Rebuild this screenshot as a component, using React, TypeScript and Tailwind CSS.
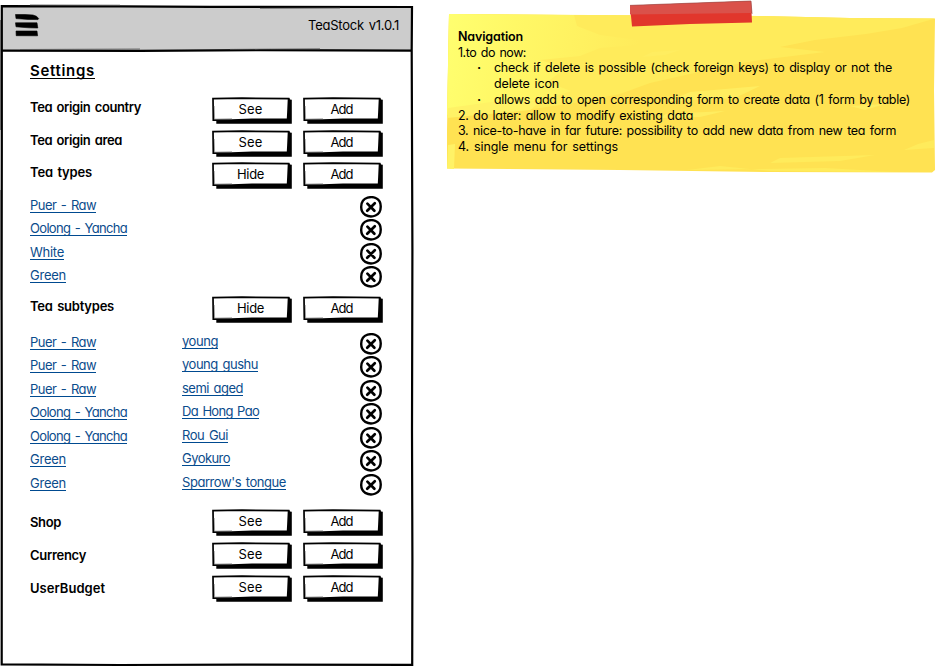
import { useLayoutEffect, useRef, useState } from "react";
import type { ReactNode } from "react";

type FitProps = { text: string; width: number; className?: string };

// Tracks a single line of text so that it spans the given width.
function Fit({ text, width, className = "" }: FitProps) {
  const ref = useRef<HTMLSpanElement>(null);
  const [spacing, setSpacing] = useState(0);
  useLayoutEffect(() => {
    const el = ref.current;
    if (!el) return;
    const old = el.style.letterSpacing;
    el.style.letterSpacing = "0px";
    const natural = el.getBoundingClientRect().width;
    el.style.letterSpacing = old;
    setSpacing((width - natural) / text.length);
  }, [text, width]);
  return (
    <span
      ref={ref}
      className={`inline-block whitespace-pre ${className}`}
      style={{ letterSpacing: `${spacing}px` }}
    >
      {text}
    </span>
  );
}

function SketchButton({ text, width }: { text: string; width: number }) {
  return (
    <button className="relative flex h-[27px] w-[81px] items-start justify-center pt-[4px] pr-[4px] leading-[16px]">
      <svg className="absolute inset-0" width="81" height="27" viewBox="0 0 81 27">
        <path d="M4.3 4H76V1.4L77.5 1.2L78 2.6L79.8 2.8V26.7H4.3V24L3 23.5Z" fill="#000" />
        <path d="M1 1.6L30 1.2L76.6 1.7L76 15L75.6 22.2L40 22.4L20 23L1.3 23.2Z" fill="#fff" stroke="#000" strokeWidth="1.7" />
        <path d="M2.2 9L2.6 22.2L20 21.8" fill="none" stroke="#666" strokeWidth=".6" />
      </svg>
      <Fit text={text} width={width} className="relative" />
    </button>
  );
}

function SectionRow({
  label,
  width,
  action,
  height,
  low = false,
}: {
  label: string;
  width: number;
  action: "See" | "Hide";
  height: string;
  low?: boolean;
}) {
  return (
    <div className={`flex ${height}`}>
      <div className={`w-[182px] font-semibold ${low ? "pt-[5px]" : "pt-[2px]"}`}>
        <Fit text={label} width={width} />
      </div>
      <SketchButton text={action} width={action === "See" ? 24 : 27} />
      <div className="w-[10px]" />
      <SketchButton text="Add" width={22} />
    </div>
  );
}

function DeleteIcon() {
  return (
    <svg width="24" height="22" viewBox="0 0 24 22" fill="none" stroke="#000" strokeLinecap="round">
      <path
        d="M8.6 1.7C11 1 15 1.1 17.2 2.3C20.5 4 21.9 7 21.7 11C21.7 15.2 19.5 18.2 16.5 19.5C13.6 20.7 9.2 20.5 6.3 18.9C3.3 17.1 2.1 14.4 2.2 10.7C2.3 6.2 4.3 3 8.6 1.7Z"
        strokeWidth="2.4"
      />
      <path d="M8.4 7.6L15.4 14.8M15.8 7.2L8.2 14.8" strokeWidth="2.7" />
    </svg>
  );
}

function Link({ text, width }: { text: string; width: number }) {
  return (
    <a className="inline-block h-[16px] border-b border-[#004a90] text-[#0b4c8c]">
      <Fit text={text} width={width} />
    </a>
  );
}

type Item = { name: string; w: number; sub?: string; sw?: number; tall?: boolean };

const widths = { puer: 66, oolong: 97, white: 34, green: 36 };

const types: Item[] = [
  { name: "Puer - Raw", w: widths.puer },
  { name: "Oolong - Yancha", w: widths.oolong, tall: true },
  { name: "White", w: widths.white },
  { name: "Green", w: widths.green },
];

const subtypes: Item[] = [
  { name: "Puer - Raw", w: widths.puer, sub: "young", sw: 36 },
  { name: "Puer - Raw", w: widths.puer, sub: "young gushu", sw: 76, tall: true },
  { name: "Puer - Raw", w: widths.puer, sub: "semi aged", sw: 61 },
  { name: "Oolong - Yancha", w: widths.oolong, sub: "Da Hong Pao", sw: 77, tall: true },
  { name: "Oolong - Yancha", w: widths.oolong, sub: "Rou Gui", sw: 46 },
  { name: "Green", w: widths.green, sub: "Gyokuro", sw: 48, tall: true },
  { name: "Green", w: widths.green, sub: "Sparrow's tongue", sw: 104 },
];

function ItemList({ items }: { items: Item[] }) {
  return (
    <>
      {items.map((it, i) => (
        <div key={i} className={`flex ${it.tall ? "h-[24px]" : "h-[23px]"}`}>
          <div className="w-[152px] pt-[1px]">
            <Link text={it.name} width={it.w} />
          </div>
          <div className="w-[177px]">{it.sub && <Link text={it.sub} width={it.sw ?? 0} />}</div>
          <DeleteIcon />
        </div>
      ))}
    </>
  );
}

function PhoneFrame() {
  return (
    <svg className="absolute inset-0" width="414" height="667" viewBox="0 0 414 667">
      <path d="M2 7L411 7.5L411.5 50L2 50Z" fill="#ccc" />
      <g fill="none" stroke="#000" strokeWidth="2.2">
        <path d="M1.8 6.2L120 6.4L210 6.8L412 7L411.7 50L412.4 250L412 430L412.4 560L412.2 664.8L240 664.6L120 665L1.7 664.4L1.8 420L1.6 300L1.8 150Z" />
        <path d="M2 50.6L140 50.8L260 50.2L412 50.6" />
      </g>
      <g fill="none" stroke="#555" strokeWidth=".8">
        <path d="M20 49.5L140 49M230 49.4L320 48.8" />
        <path d="M.5 20V130M.5 190V300" />
        <path d="M30 5L120 5.2M260 8.3L340 8" />
      </g>
      <path
        d="M15.5 14.5L25 14.5L33 15Q37 15.6 38.7 18.6L38 19.6L28 19.4L16 18.6ZM15.5 22.8L37 22.8L37.8 28L29 27.8L22 27.3L16 26.8ZM16 31L37 31L37.6 35.8L16.2 35.7Z"
        fill="#000"
        stroke="#000"
        strokeWidth=".6"
      />
    </svg>
  );
}

function NotePaper() {
  return (
    <svg className="absolute inset-0" width="495" height="180" viewBox="442 0 495 180">
      <defs>
        <linearGradient id="glow" x1="0" y1="0" x2="1" y2=".12">
          <stop offset="0" stopColor="#ffff70" />
          <stop offset=".35" stopColor="#fff866" />
          <stop offset="1" stopColor="#ffeb5b" />
        </linearGradient>
      </defs>
      <path d="M449 14L560 15L690 15.5L760 16L850 18L935 18.5L934 90L935 170L932 172.5L770 172L620 170L447 168.5L447 130Z" fill="#ffe252" />
      <path d="M449 14L760 16L850 18L935 18.5L902 28L866 34L815 40L780 47L825 52L760 60L720 67L690 74L650 83L620 94L580 102L520 111L447 117Z" fill="#ffeb5b" />
      <path d="M449 14L574 15L577 26L600 35L645 41L637 45L600 48L580 56L540 60L566 68L547 82L571 91L540 101L490 105L447 115Z" fill="url(#glow)" />
      <path d="M448 108L506 100L540 102L530 110L447 118ZM448 145L455 144L454 169L447 168.5Z" fill="#fff266" />
      <path d="M652 52L680 50L665 55L642 57ZM690 92L760 86L735 98L669 101ZM850 106L885 104L865 110ZM666 114L725 111L700 117L660 118Z" fill="#ffed60" />
      <path d="M918 144L934 140V148L904 150ZM780 158L875 155L840 161L770 163ZM687 170L720 166L770 171L895 172L825 168Z" fill="#ffeb5b" />
      <path d="M630 5.5L751 1L752 22.5L690 24L632 26.5Z" fill="#e1362c" />
      <path d="M630 5.5L751 1L752 13L630 14.5Z" fill="#da514a" />
      <path d="M630 5.4L690 3.2L751 1L752 14" fill="none" stroke="#9c4c47" strokeWidth=".7" />
    </svg>
  );
}

function Bullet({ children }: { children: ReactNode }) {
  return (
    <li className="flex">
      <span className="flex w-[36px] justify-center pl-[6px] font-bold">·</span>
      <div className="flex flex-col items-start">{children}</div>
    </li>
  );
}

export default function App() {
  return (
    <div className="flex h-[667px] w-[937px] overflow-hidden bg-white font-['Inter','Liberation_Sans',sans-serif] text-[13px] leading-[16px] text-black [font-feature-settings:'cv11'] [word-spacing:1.5px]">
      <main className="relative h-[667px] w-[442px]">
        <PhoneFrame />
        <div className="relative flex w-[414px] flex-col">
          <header className="flex h-[50px] justify-end pt-[17px] pr-[15px]">
            <Fit text="TeaStock v1.0.1" width={91} />
          </header>
          <div className="pl-[30px]">
            <h1 className="h-[47px] pt-[12px] text-[15px] leading-[17px] font-semibold">
              <span className="inline-block h-[17px] border-b border-black">
                <Fit text="Settings" width={65} />
              </span>
            </h1>
            <SectionRow label="Tea origin country" width={111} action="See" height="h-[33px]" />
            <SectionRow label="Tea origin area" width={92} action="See" height="h-[32px]" />
            <SectionRow label="Tea types" width={62} action="Hide" height="h-[34px]" />
            <ItemList items={types} />
            <div className="h-[7px]" />
            <SectionRow label="Tea subtypes" width={84} action="Hide" height="h-[37px]" />
            <ItemList items={subtypes} />
            <div className="h-[12px]" />
            <SectionRow label="Shop" width={31} action="See" height="h-[33px]" low />
            <SectionRow label="Currency" width={56} action="See" height="h-[33px]" low />
            <SectionRow label="UserBudget" width={75} action="See" height="h-[33px]" low />
          </div>
        </div>
      </main>
      <aside className="relative h-[180px] w-[495px]">
        <NotePaper />
        <div className="relative flex flex-col items-start pt-[29px] pl-[16px] text-[12.5px] leading-[15.7px]">
          <Fit text="Navigation" width={65} className="font-semibold" />
          <Fit text="1.to do now:" width={68} />
          <ul>
            <Bullet>
              <Fit text="check if delete is possible (check foreign keys) to display or not the" width={398} />
              <Fit text="delete icon" width={65} />
            </Bullet>
            <Bullet>
              <Fit text="allows add to open corresponding form to create data (1 form by table)" width={416} />
            </Bullet>
          </ul>
          <Fit text="2. do later: allow to modify existing data" width={235} />
          <Fit text="3. nice-to-have in far future: possibility to add new data from new tea form" width={438} />
          <Fit text="4. single menu for settings" width={160} />
        </div>
      </aside>
    </div>
  );
}
